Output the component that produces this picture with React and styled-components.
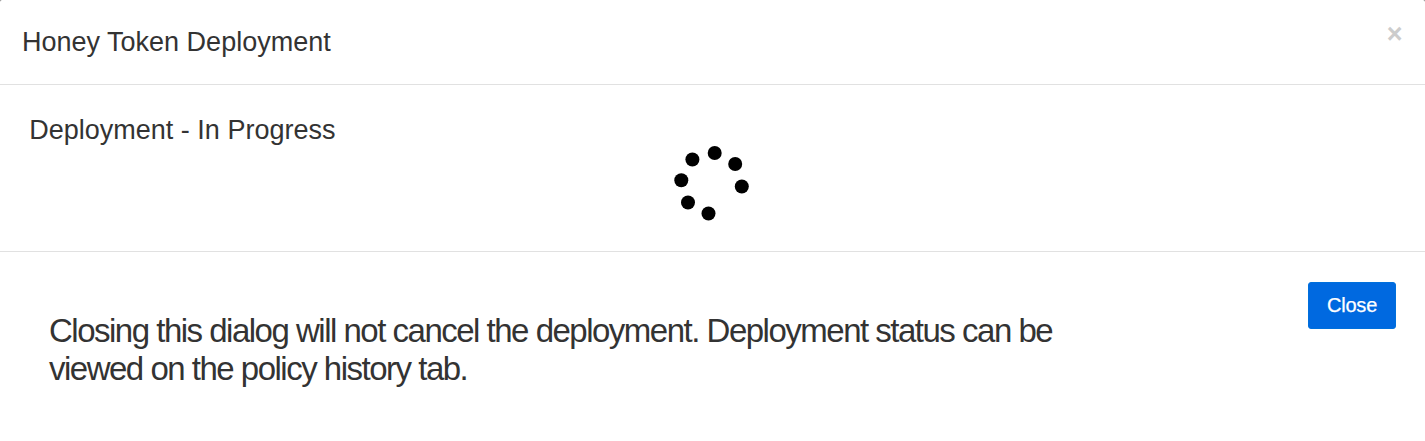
import React from "react";
import styled, { createGlobalStyle } from "styled-components";

const GlobalStyle = createGlobalStyle`
  * { box-sizing: border-box; }
  body { margin: 0; background: #777; color: #333; font-family: "Liberation Sans", Arial, sans-serif; }
`;
const Dialog = styled.section`
  display: flex; flex-direction: column; height: 441px; overflow: hidden; background: #fff;
  border-radius: 2px 2px 0 0;
`;
const Header = styled.header`
  display: flex; justify-content: space-between; align-items: flex-start;
  height: 85px; padding: 22px 22.5px 0 22px; border-bottom: 1px solid #e1e1e1;
`;
const Title = styled.h4`
  margin: 0; font-size: 27px; line-height: 40px; font-weight: 400; white-space: nowrap;
`;
const Dismiss = styled.button`
  border: 0; padding: 0; background: none; color: #ccc; display: flex;
  font: 700 27px/24px "Liberation Sans", Arial, sans-serif;
`;
const Body = styled.div`
  display: grid; grid-template-columns: 674px 75px 1fr; height: 167px; border-bottom: 1px solid #e1e1e1;
`;
const Status = styled(Title)`
  padding: 25px 0 0 29.3px;
`;
const Spinner = styled.svg`
  width: 75px; height: 75px; margin-top: 61px; display: block;
`;
const Footer = styled.footer`
  display: flex; justify-content: space-between; align-items: flex-start; padding: 30px 29px 0 49px;
`;
const Note = styled.p`
  margin: 30px 0 0; width: 1060px; font-size: 33px; line-height: 38px; letter-spacing: -1.5px;
`;
const CloseButton = styled.button`
  width: 88px; height: 47px; padding: 0; border: 1px solid #0070dc; border-radius: 3px;
  background: #0069e0; color: #fff; font: 400 20px "Liberation Sans", Arial, sans-serif;
  letter-spacing: -0.2px; -webkit-text-stroke: 0.25px #fff;
`;
const dots = [[40.7,17],[61.2,28],[67.8,50.5],[34.5,77.5],[14,66.5],[7.3,44.2],[18.4,23.5]];

export default function App() {
  return (
    <>
      <GlobalStyle />
      <Dialog>
        <Header>
          <Title>Honey Token Deployment</Title>
          <Dismiss aria-label="Dismiss">×</Dismiss>
        </Header>
        <Body>
          <Status>Deployment - In Progress</Status>
          <Spinner viewBox="0 10 75 75">
            {dots.map(([x, y]) => <circle key={x} cx={x} cy={y} r="7" />)}
          </Spinner>
        </Body>
        <Footer>
          <Note>Closing this dialog will not cancel the deployment. Deployment status can be<br />viewed on the policy history tab.</Note>
          <CloseButton>Close</CloseButton>
        </Footer>
      </Dialog>
    </>
  );
}
